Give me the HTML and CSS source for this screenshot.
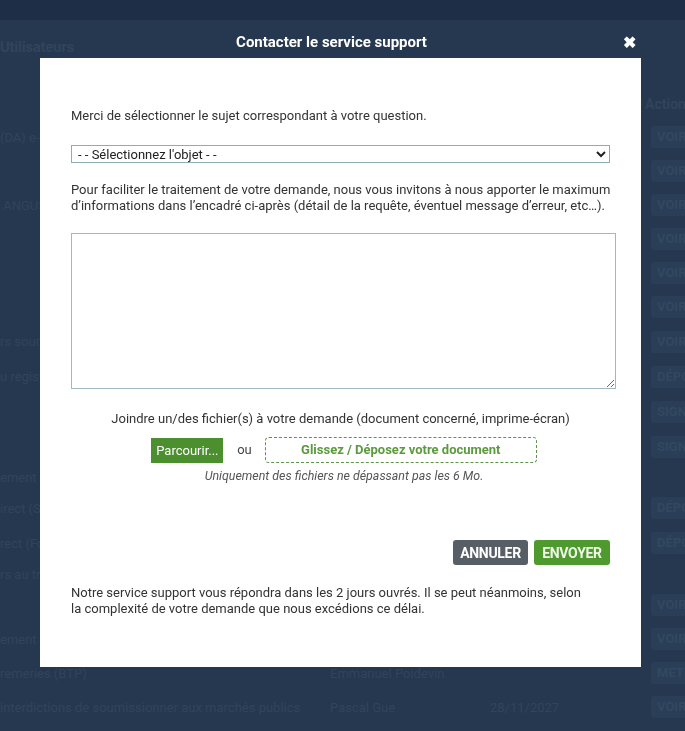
FILE: index.html
```html
<!DOCTYPE html>
<html lang="fr">
<head>
    <meta charset="UTF-8">
    <meta name="viewport" content="width=device-width, initial-scale=1.0">
    <title>Contacter le service support</title>
    <link rel="stylesheet" href="styles.css">
</head>
<body>
    <div class="page">
        <div class="topbar"></div>
        <div class="page-title">Utilisateurs</div>
        <div class="grid">
            <div class="row head"><span></span><span></span><span></span><span class="act-title">Actions</span></div>
            <div class="row"><span>(DA) e-Attestations</span><span></span><span></span><span class="act">VOIR</span></div>
            <div class="row"><span></span><span></span><span></span><span class="act">VOIR</span></div>
            <div class="row"><span>&nbsp;ANGUS</span><span></span><span></span><span class="act">VOIR</span></div>
            <div class="row"><span></span><span></span><span></span><span class="act">VOIR</span></div>
            <div class="row"><span></span><span></span><span></span><span class="act">VOIR</span></div>
            <div class="row"><span></span><span></span><span></span><span class="act">VOIR</span></div>
            <div class="row tall"><span>rs soumissionnaires</span><span></span><span></span><span class="act">VOIR</span></div>
            <div class="row tall"><span>u registre</span><span></span><span></span><span class="act">DÉPOSER</span></div>
            <div class="row tall"><span></span><span></span><span></span><span class="act">SIGNER</span></div>
            <div class="row tall"><span></span><span></span><span></span><span class="act">SIGNER</span></div>
            <div class="row group"><span>ement</span><span></span><span></span><span></span></div>
            <div class="row wide"><span>irect (Sous-traitance)</span><span></span><span></span><span class="act">DÉPOSER</span></div>
            <div class="row"><span>rect (Fournisseurs)</span><span></span><span></span><span class="act">DÉPOSER</span></div>
            <div class="row group2"><span>rs au travail</span><span></span><span></span><span></span></div>
            <div class="row"><span></span><span></span><span></span><span class="act">VOIR</span></div>
            <div class="row"><span>ement</span><span></span><span></span><span class="act">VOIR</span></div>
            <div class="row"><span>remeries (BTP)</span><span>Emmanuel Poidevin</span><span></span><span class="act">METTRE</span></div>
            <div class="row"><span>interdictions de soumissionner aux marchés publics</span><span>Pascal Gue</span><span>28/11/2027</span><span class="act">VOIR</span></div>
        </div>
    </div>

    <div class="overlay">
        <div class="modal">
            <div class="modal-head">
                <span></span>
                <h1>Contacter le service support</h1>
                <button class="close" type="button">&#10006;</button>
            </div>
            <form class="modal-body">
                <p class="intro">Merci de sélectionner le sujet correspondant à votre question.</p>
                <select class="subject">
                    <option>- - Sélectionnez l'objet - -</option>
                </select>
                <p class="hint">Pour faciliter le traitement de votre demande, nous vous invitons à nous apporter le maximum<br>d’informations dans l’encadré ci-après (détail de la requête, éventuel message d’erreur, etc…).</p>
                <textarea class="message"></textarea>

                <div class="attach">
                    <p class="attach-label">Joindre un/des fichier(s) à votre demande (document concerné, imprime-écran)</p>
                    <div class="attach-row">
                        <button type="button" class="browse">Parcourir...</button>
                        <span class="or">ou</span>
                        <div class="dropzone">Glissez / Déposez votre document</div>
                    </div>
                    <p class="attach-note">Uniquement des fichiers ne dépassant pas les 6 Mo.</p>
                </div>

                <div class="actions">
                    <button type="button" class="btn cancel">ANNULER</button>
                    <button type="submit" class="btn send">ENVOYER</button>
                </div>

                <p class="footer-note">Notre service support vous répondra dans les 2 jours ouvrés. Il se peut néanmoins, selon<br>la complexité de votre demande que nous excédions ce délai.</p>
            </form>
        </div>
    </div>
</body>
</html>
```

FILE: styles.css
```css
body { margin: 0; padding: 0; background: #26384f; font-family: Roboto, "Liberation Sans", sans-serif; overflow: hidden; height: 731px; }

/* faded page behind the dialog */
.page { color: #31445b; font-size: 13px; }
.topbar { height: 20px; background: #1d2e46; }
.page-title { font-weight: bold; font-size: 15px; padding: 18px 0 0 0; height: 18px; line-height: 18px; letter-spacing: -0.3px; }
.grid { display: flex; flex-direction: column; }
.row { display: grid; grid-template-columns: 330px 160px 161px 40px; height: 34px; align-items: center; white-space: nowrap; overflow: hidden; }
.row.head { height: 64px; align-items: end; padding-bottom: 8px; box-sizing: border-box; }
.row.tall { height: 35px; }
.row.group { height: 26px; }
.row.wide { height: 36px; }
.row.group2 { height: 28px; }
.act-title { font-weight: bold; font-size: 14px; margin-left: -6px; }
.act { display: inline-block; background: #2a3e57; color: #33485f; font-weight: bold; font-size: 13px; padding: 3px 6px; line-height: 16px; border-radius: 3px; }

/* dialog */
.overlay { position: fixed; top: 0; left: 0; right: 0; bottom: 0; padding-left: 40px; }
.modal { width: 601px; }
.modal-head { height: 58px; display: grid; grid-template-columns: 1fr auto 1fr; align-items: end; }
.modal-head h1 { margin: 0 18px 7px 0; color: white; font-size: 15px; font-weight: bold; line-height: 18px; letter-spacing: 0; }
.close { justify-self: end; margin: 0 5px 6px 0; background: none; border: none; color: white; font-size: 16px; font-weight: bold; padding: 0; line-height: 18px; cursor: pointer; }

.modal-body { background: white; padding: 50px 31px 50px 31px; color: #333; font-size: 13px; line-height: 16px; }
.modal-body p { margin: 0; }
.intro { margin-bottom: 21px !important; }
.subject { display: block; width: 539px; height: 18px; font-family: Roboto, "Liberation Sans", sans-serif; font-size: 13px; color: #222; border: 1px solid #8fadb1; padding: 0 2px; border-radius: 0; background: white; margin-bottom: 19px; }
.hint { margin-bottom: 19px !important; white-space: nowrap; }
.message { display: block; width: 545px; height: 156px; box-sizing: border-box; border: 1px solid #9fbabd; margin: 0 0 22px 0; font-family: inherit; }

.attach { text-align: center; }
.attach-label { margin-bottom: 10px !important; }
.attach-row { display: flex; justify-content: center; align-items: center; height: 26px; margin-left: 7px; }
.browse { background: #4b8f2e; color: white; border: none; font-family: inherit; font-size: 13px; height: 25px; padding: 0 5px; width: 72px; cursor: pointer; }
.or { margin: 0 13px 0 14px; color: #444; }
.dropzone { width: 272px; height: 26px; box-sizing: border-box; border: 1px dashed #5d934a; border-radius: 4px; color: #5b9a3d; font-weight: bold; line-height: 24px; }
.attach-note { margin-top: 5px !important; font-style: italic; font-size: 12.4px; color: #555; margin-left: 7px !important; }

.actions { display: flex; justify-content: flex-end; gap: 6px; margin-top: 56px; margin-bottom: 20px; }
.btn { border: none; border-radius: 3px; color: white; font-family: inherit; font-weight: bold; font-size: 14px; height: 25px; padding: 0 5px; letter-spacing: -0.3px; cursor: pointer; }
.cancel { background: #585e66; width: 75px; }
.send { background: #4e9a2f; color: #eef8e4; width: 76px; }
.footer-note { white-space: nowrap; }
```
